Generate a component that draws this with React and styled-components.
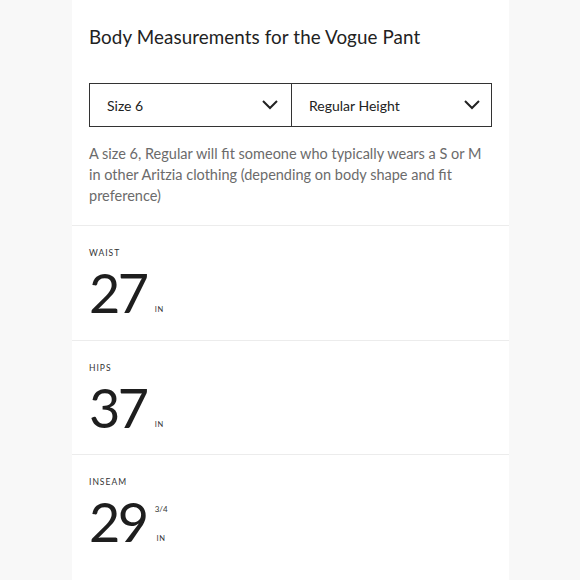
import React from "react";
import styled, { createGlobalStyle } from "styled-components";

const Global = createGlobalStyle`
  html, body { margin: 0; padding: 0; background: #f8f8f8; }
  body { font-family: "Lato", "Noto Sans", sans-serif; color: #222; }
`;

const Page = styled.div`
  width: 580px;
  height: 580px;
  overflow: hidden;
  display: flex;
  justify-content: flex-start;
  padding-left: 72px;
  box-sizing: border-box;
`;

const Panel = styled.div`
  width: 437px;
  background: #fff;
  min-height: 600px;
`;

const Head = styled.div`
  padding: 26px 17px 0 17px;
`;

const Title = styled.h1`
  margin: 0;
  font-size: 18.8px;
  font-weight: 400;
  color: #222;
  line-height: 22px;
  letter-spacing: 0.1px;
`;

const Selects = styled.div`
  margin-top: 35px;
  display: grid;
  grid-template-columns: 201px 202px;
  border: 1.5px solid #333;
  height: 44px;
  box-sizing: border-box;
`;

const Select = styled.div`
  display: flex;
  align-items: center;
  justify-content: space-between;
  padding: 0 12px 0 17px;
  font-size: 14px;
  color: #222;
  border-left: ${(p) => (p.$first ? "none" : "1.5px solid #333")};
`;

const Desc = styled.p`
  margin: 16px 0 0 0;
  font-size: 14.5px;
  line-height: 21px;
  color: #6b6b6b;
  padding-bottom: 19px;
`;

const Section = styled.div`
  border-top: 1.5px solid #ececec;
  padding: 22px 17px 0 17px;
  height: 114.7px;
  box-sizing: border-box;
`;

const Label = styled.div`
  font-size: 8.5px;
  letter-spacing: 1px;
  color: #333;
  text-transform: uppercase;
  line-height: 10px;
`;

const ValueRow = styled.div`
  display: flex;
  align-items: flex-end;
  margin-top: 13px;
`;

const Num = styled.div`
  font-size: 54px;
  line-height: 44px;
  font-weight: 400;
  color: #1e1e1e;
  letter-spacing: -2.5px;
`;

const Units = styled.div`
  display: flex;
  flex-direction: column;
  justify-content: space-between;
  align-items: center;
  margin-left: 8px;
  height: 40px;
`;

const Frac = styled.span`
  font-size: 8px;
  color: #333;
`;

const Unit = styled.span`
  font-size: 7.5px;
  letter-spacing: 0.8px;
  color: #333;
  margin-top: auto;
  margin-bottom: 1px;
`;

const Chevron = () => (
  <svg width="18" height="12" viewBox="0 0 18 12">
    <path d="M2 2 L9 9 L16 2" fill="none" stroke="#222" strokeWidth="2" />
  </svg>
);

const data = [
  { label: "Waist", num: "27" },
  { label: "Hips", num: "37" },
  { label: "Inseam", num: "29", frac: "3/4" },
];

export default function App() {
  return (
    <>
      <Global />
      <Page>
        <Panel>
          <Head>
            <Title>Body Measurements for the Vogue Pant</Title>
            <Selects>
              <Select $first>
                <span>Size 6</span>
                <Chevron />
              </Select>
              <Select>
                <span>Regular Height</span>
                <Chevron />
              </Select>
            </Selects>
            <Desc>
              A size 6, Regular will fit someone who typically wears a S or M in
              other Aritzia clothing (depending on body shape and fit
              preference)
            </Desc>
          </Head>
          {data.map((d) => (
            <Section key={d.label}>
              <Label>{d.label}</Label>
              <ValueRow>
                <Num>{d.num}</Num>
                <Units>
                  {d.frac && <Frac>{d.frac}</Frac>}
                  <Unit>IN</Unit>
                </Units>
              </ValueRow>
            </Section>
          ))}
        </Panel>
      </Page>
    </>
  );
}
